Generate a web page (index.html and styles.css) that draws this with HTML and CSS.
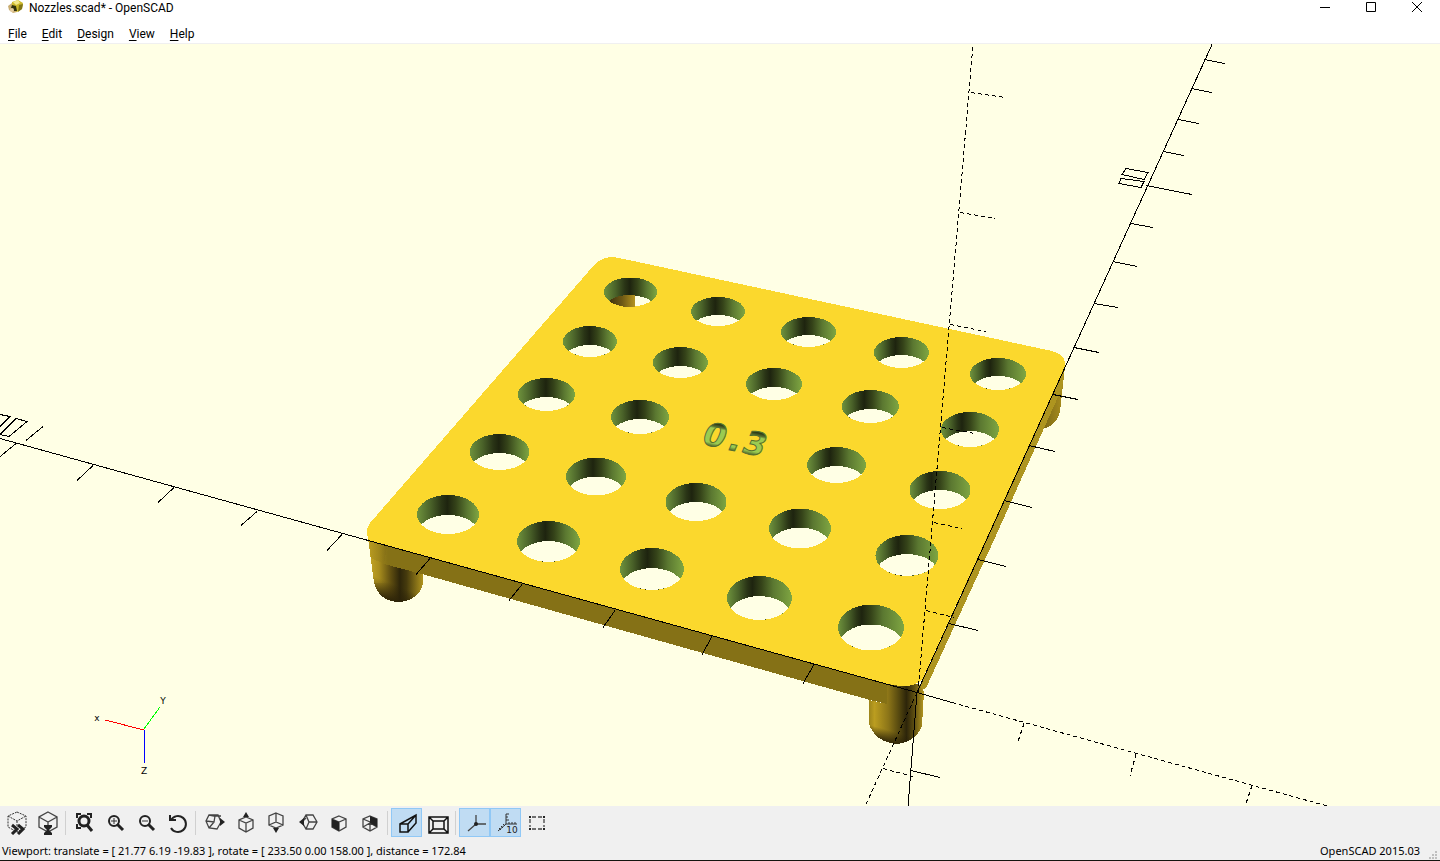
FILE: index.html
```html
<!DOCTYPE html>
<html lang="en">
<head>
<meta charset="utf-8">
<title>Nozzles.scad* - OpenSCAD</title>
<link rel="stylesheet" href="styles.css">
</head>
<body>
<div class="window">
  <header class="titlebar">
    <svg class="app-icon" viewBox="0 0 16 14" aria-hidden="true">
      <path d="M0 6 4 3 9 7 9 12 5 13 1 10z" fill="#c9ad72"/>
      <path d="M4 2 10 0 15 3 14 9 9 12 4 8z" fill="#cdb92c"/>
      <path d="M5 2 10 0 12 3 8 5z" fill="#f3e78a"/>
      <path d="M4 5 8 6 9 11 6 11 3 8z" fill="#30310d"/>
      <path d="M11 5 15 4 14 9 10 12z" fill="#827617"/>
      <circle cx="4" cy="10" r="2" fill="#e6cda0"/>
    </svg>
    <h1 class="title">Nozzles.scad* - OpenSCAD</h1>
    <div class="controls">
      <button class="control" aria-label="Minimize"><svg viewBox="0 0 12 12"><path d="M1 6.500h10"/></svg></button>
      <button class="control" aria-label="Maximize"><svg viewBox="0 0 12 12"><path d="M1.500 1.500h9v9h-9z"/></svg></button>
      <button class="control" aria-label="Close"><svg viewBox="0 0 12 12"><path d="M1 1l10 10M11 1L1 11"/></svg></button>
    </div>
  </header>
  <nav class="menubar">
    <button class="menu"><u>F</u>ile</button>
    <button class="menu"><u>E</u>dit</button>
    <button class="menu"><u>D</u>esign</button>
    <button class="menu"><u>V</u>iew</button>
    <button class="menu"><u>H</u>elp</button>
  </nav>

  <main class="viewport">
    <svg class="scene" viewBox="0 44 1440 762" preserveAspectRatio="xMidYMid slice" role="img" aria-label="Nozzle holder plate">
      <defs>
        <linearGradient id="postLeft"><stop offset="0" stop-color="#c9a924"/><stop offset=".2" stop-color="#a88d1d"/><stop offset=".42" stop-color="#5e4d10"/><stop offset=".58" stop-color="#2e260a"/><stop offset=".7" stop-color="#453a0d"/><stop offset="1" stop-color="#b0941e"/></linearGradient>
        <linearGradient id="postRight"><stop offset="0" stop-color="#9d851b"/><stop offset=".1" stop-color="#bb9d20"/><stop offset=".35" stop-color="#8c7518"/><stop offset=".55" stop-color="#54470f"/><stop offset=".68" stop-color="#2d250a"/><stop offset=".82" stop-color="#5d4e11"/><stop offset="1" stop-color="#b89a20"/></linearGradient>
        <linearGradient id="postBack"><stop offset="0" stop-color="#5a4b10"/><stop offset=".4" stop-color="#7e6a16"/><stop offset="1" stop-color="#ad911e"/></linearGradient>
        <linearGradient id="capShade" x1=".65" y1="0" x2=".3" y2="1"><stop offset=".7" stop-color="#2a2108" stop-opacity="0"/><stop offset=".93" stop-color="#2a2108" stop-opacity=".85"/><stop offset="1" stop-color="#2a2108" stop-opacity=".3"/></linearGradient>
        <linearGradient id="faceEnd" gradientUnits="userSpaceOnUse" x1="368" y1="0" x2="388" y2="0"><stop offset="0" stop-color="#b4971f"/><stop offset="1" stop-color="#857116"/></linearGradient>
        <linearGradient id="peg"><stop offset="0" stop-color="#3d3210"/><stop offset=".5" stop-color="#6d5814"/><stop offset="1" stop-color="#b3931f"/></linearGradient>
        <linearGradient id="engrave" x1="0" y1="0" x2="0" y2="1"><stop offset=".2" stop-color="#303b17"/><stop offset=".27" stop-color="#577030"/><stop offset=".32" stop-color="#9bcb51"/><stop offset=".7" stop-color="#9bcb51"/><stop offset=".8" stop-color="#4b622a"/></linearGradient>
      </defs>

      <g class="solid">
        <path fill="url(#postBack)" d="M1065 366 1060 412Q1057 425 1043 429L1030 400z"/>
        <path fill="#ae951f" d="M1065 364 1062 388 994 540 970 592 926 688 917 692z"/>
        <path fill="url(#postLeft)" d="M368 538 374 583Q379 601 398 602 418 601 423 584V560z"/>
        <path fill="url(#capShade)" d="M368 538 374 583Q379 601 398 602 418 601 423 584V574z"/>
        <path fill="url(#faceEnd)" d="M368 538 892 684V705L870 700 422 574 384 564 371 558z"/>
        <path fill="url(#postLeft)" d="M368 538 387 546 384 564 423 575 423 584 374 583z" opacity=".35"/>
        <path fill="url(#postRight)" d="M869 700 887 704V684H919L924 692 922 726Q915 743 895 744 875 741 869 724z"/>
        <path fill="url(#capShade)" d="M869 700H923L922 726Q915 743 895 744 875 741 869 724z"/>
        <path fill="#fbd82d" d="M595 264Q603 257 613 257L624 259 1052 351Q1064 354 1065 363L1065 366 922 680Q914 687 900 686L888 684 370 541Q366 536 367 529L370 523z"/>
      </g>

      <g id="holes" class="solid"></g>
      <path class="solid" fill="url(#peg)" d="M609 301A26 14 0 0 1 635 295V307A26 14 0 0 1 609 301z"/>

      <text class="engraved" x="702 728 743" y="444" transform="rotate(12 702 444)">0.3</text>

      <g class="axes" transform="translate(0 .5)">
        <path d="M0 438 917 692 952 702M917 692 1212 44M917 692 908 806"/>
        <path d="M16 443-1 457M93 465 77 480M174 487 158 502M257 511 241 525M342 534 327 550M430 558 416 574M522 584 509 600M615 610 603 627M712 636 702 654M814 664 803 683"/>
        <path d="M1204 59 1225 63M1191 88 1212 92M1178 119 1199 123M1163 151 1184 155M1146 185 1192 194M1131 223 1153 227M1113 261 1137 266M1094 303 1118 307M1074 347 1099 352M1053 394 1078 399M1029 445 1055 451M1004 500 1032 507M978 559 1006 566M949 623 978 630M911 770 940 777"/>
        <path d="M43 426 26 440M16 418 27 421 9 436 0 434zM0 414 10 416 0 426"/>
        <path d="M1126 168 1148 172 1144 179 1122 174zM1121 178 1144 181 1141 187 1119 183z"/>
        <path class="dashed" d="M952 702 1329 806M917 692 865 806M918 692 973 44"/>
        <path class="dashed" d="M971 92 1005 97M960 212 995 218M950 324 986 331M942 427 975 433M934 522 962 528M926 610 954 617M883 768 913 776M1024 723 1018 741M1136 754 1130 775M1252 785 1246 803"/>
      </g>

      <g class="gizmo">
        <path stroke="#f00" d="M144 730 105 720"/>
        <path stroke="#0f0" d="M144 729 160 707"/>
        <path stroke="#00f" d="M144.500 730V763"/>
        <text x="97" y="721">x</text>
        <text x="163" y="704">Y</text>
        <text x="144" y="774">Z</text>
      </g>
    </svg>
  </main>

  <div class="toolbar" role="toolbar" aria-label="View">
    <button class="tool" aria-label="Preview"><svg viewBox="0 0 24 24"><path stroke-dasharray="2 1" d="M12 1 21 5V16L12 21 3 16V5zM3 5l9 5 9-5M12 10v5"/><path class="heavy" d="M7 14l5 4-5 5M13 14l5 4-5 5"/></svg></button>
    <button class="tool" aria-label="Render"><svg viewBox="0 0 24 24"><path class="edge" d="M12 1 21 6V16L12 21 3 16V6zM3 6l9 5 9-5M12 11v5"/><path class="filled" d="M8 14h8v2l-3 3 3 3v2H8v-2l3-3-3-3z"/></svg></button>
    <span class="separator"></span>
    <button class="tool" aria-label="View all"><svg viewBox="0 0 24 24"><path class="medium" d="M4 7V3h4M14 3h4v4M4 13v4h4"/><circle class="ring" cx="11" cy="10" r="5"/><path class="heavy" d="M14 14l5 6"/></svg></button>
    <button class="tool" aria-label="Zoom in"><svg viewBox="0 0 24 24"><circle class="lens" cx="10" cy="10" r="5"/><path d="M7 10h6M10 7v6"/><path class="heavy" d="M13 13l6 6"/></svg></button>
    <button class="tool" aria-label="Zoom out"><svg viewBox="0 0 24 24"><circle class="lens" cx="10" cy="10" r="5"/><path d="M7 10h6"/><path class="heavy" d="M13 13l6 6"/></svg></button>
    <button class="tool" aria-label="Reset view"><svg viewBox="0 0 24 24"><path class="medium" d="M5 9A8 8 0 1 1 5 17"/><path class="medium" d="M4 4v5h6"/></svg></button>
    <span class="separator"></span>
    <button class="tool" aria-label="Right"><svg viewBox="0 0 24 24"><path class="edge" d="M6 4H15L18 11 14 18 6 17 3 10zM6 4l5 1 7 0M12 5l-1 6-8-1M11 11l-5 6"/><path class="filled" d="M17 7l5 4-5 4z"/></svg></button>
    <button class="tool" aria-label="Top"><svg viewBox="0 0 24 24"><path class="edge" d="M12 6 19 9V17L12 21 5 17V9zM5 9l7 3 7-3M12 12v9M12 3v3"/><path class="filled" d="M12 1l3 5H9z"/></svg></button>
    <button class="tool" aria-label="Bottom"><svg viewBox="0 0 24 24"><path class="edge" d="M11 2 18 5V14L11 17 4 14V5zM11 2v9M4 14l7-3 7 3"/><path class="filled" d="M11 22l3-5H8z"/></svg></button>
    <button class="tool" aria-label="Left"><svg viewBox="0 0 24 24"><path class="edge" d="M10 4H17L21 11 17 18H10L6 11zM10 4l3 7H21M13 11l-3 7M6 11l4-4"/><path class="filled" d="M8 7l-5 4 5 4z"/></svg></button>
    <button class="tool" aria-label="Front"><svg viewBox="0 0 24 24"><path class="edge" d="M12 5 19 8V16L12 20 5 16V8zM5 8l7 3 7-3M12 11v9"/><path class="filled" d="M5 8l7 3v9l-7-4z"/></svg></button>
    <button class="tool" aria-label="Back"><svg viewBox="0 0 24 24"><path class="edge" d="M12 5 19 8V16L12 20 5 16V8zM5 8l7 3v9M5 16l7-4 7 4"/><path class="filled" d="M12 5l7 3v8l-7-4z"/></svg></button>
    <span class="separator"></span>
    <button class="tool active" aria-label="Perspective" aria-pressed="true"><svg viewBox="0 0 24 24"><path class="bold" d="M5 13h8v8H5zM5 13 21 4V12L13 21M13 13l8-9"/></svg></button>
    <button class="tool" aria-label="Orthogonal"><svg viewBox="0 0 24 24"><path class="bold" d="M3 6h19v16H3zM7 10h11v8H7zM3 6l4 4M22 6l-4 4M3 22l4-4M22 22l-4-4"/></svg></button>
    <span class="separator"></span>
    <button class="tool active" aria-label="Show axes" aria-pressed="true"><svg viewBox="0 0 24 24"><path class="edge" d="M13 4v9h10M13 13l-8 7"/><circle class="filled" cx="13" cy="13" r="2"/></svg></button>
    <button class="tool active" aria-label="Show scale markers" aria-pressed="true"><svg viewBox="0 0 24 24"><path d="M12 3v10h11M12 3h3M12 6h2M12 9h3M12 13l-8 7M15 13v-2M18 13v-2M21 13v-2M9 13l2 2M7 15l2 2M5 17l2 2"/><text class="scale-text" x="18" y="22">10</text></svg></button>
    <button class="tool" aria-label="Show edges"><svg viewBox="0 0 24 24"><path class="edge" d="M7 6h10M7 18h10M5 8v8M19 8v8" stroke-dasharray="4 2"/><path class="filled" d="M4 5h2v2H4zM18 5h2v2h-2zM4 17h2v2H4zM18 17h2v2h-2z"/></svg></button>
  </div>

  <footer class="statusbar">
    <span>Viewport: translate = [ 21.77 6.19 -19.83 ], rotate = [ 233.50 0.00 158.00 ], distance = 172.84</span>
    <span class="version">OpenSCAD 2015.03</span>
    <svg class="grip" viewBox="0 0 10 10" aria-hidden="true"><path d="M7 1h2v2H7zM4 4h2v2H4zM7 4h2v2H7zM1 7h2v2H1zM4 7h2v2H4zM7 7h2v2H7z"/></svg>
  </footer>
</div>
<script src="scene.js"></script>
</body>
</html>
```
FILE: styles.css
```css
* {
  box-sizing: border-box;
}

body {
  margin: 0;
  color: #000;
  font: 12px/16px Roboto, "Noto Sans", sans-serif;
}

button {
  margin: 0;
  padding: 0;
  border: 0;
  background: none;
  color: inherit;
  font: inherit;
}

.window {
  display: flex;
  flex-direction: column;
  height: 100vh;
  background: #fff;
  border-bottom: 1px solid #14140f;
}

.titlebar {
  display: flex;
  align-items: flex-start;
  height: 24px;
  padding-left: 8px;
}

.app-icon {
  width: 16px;
  height: 14px;
  margin-right: 5px;
}

.title {
  margin: 0;
  font-size: 12px;
  font-weight: 400;
  line-height: 16px;
}

.controls {
  display: flex;
  margin-left: auto;
}

.control {
  display: grid;
  place-items: center;
  width: 46px;
  height: 14px;
}

.control svg {
  width: 12px;
  height: 12px;
  fill: none;
  stroke: #000;
}

.menubar {
  display: flex;
  align-items: flex-start;
  gap: 15px;
  height: 20px;
  padding: 2px 8px 0;
  border-bottom: 1px solid #f0f0f0;
}

.menu {
  line-height: 16px;
}

.menu u {
  text-underline-offset: 2px;
}

.viewport {
  flex: 1;
  min-height: 0;
  background: #ffffe5;
}

.scene {
  display: block;
  width: 100%;
  height: 100%;
}

.solid,
.axes,
.gizmo {
  shape-rendering: crispEdges;
}

.axes {
  fill: none;
  stroke: #000;
}

.dashed {
  stroke-dasharray: 4 3;
}

.opening {
  fill: #ffffe5;
}

.engraved {
  fill: url(#engrave);
  stroke: #55702e;
  font: italic 700 32px "DejaVu Sans", sans-serif;
}

.gizmo text {
  font: 9px "DejaVu Sans", sans-serif;
  text-anchor: middle;
}

.toolbar {
  display: flex;
  height: 35px;
  padding: 2px 1px 4px;
  background: #f0f0f0;
}

.tool {
  display: grid;
  place-items: center;
  width: 31px;
  border: 1px solid transparent;
}

.tool.active {
  background: #c0dcf3;
  border-color: #90c8f6;
}

.tool svg {
  width: 24px;
  height: 24px;
  fill: none;
  stroke: #333;
}

.separator {
  width: 6px;
  background: linear-gradient(#d0d0d0, #d0d0d0) 2px 3px / 1px 24px no-repeat;
}

.tool .filled {
  fill: #222;
  stroke: none;
}

.tool .edge {
  stroke: #444;
  stroke-width: 1.3;
}

.tool .bold {
  stroke: #111;
  stroke-width: 1.5;
}

.tool .medium {
  stroke: #222;
  stroke-width: 2;
}

.tool .heavy {
  stroke: #222;
  stroke-width: 3;
}

.tool .ring {
  stroke: #222;
  stroke-width: 3;
}

.tool .lens {
  stroke: #222;
  stroke-width: 2;
}

.tool .scale-text {
  fill: #222;
  stroke: none;
  font: 9px "DejaVu Sans", sans-serif;
  text-anchor: middle;
}

.statusbar {
  display: flex;
  align-items: flex-end;
  height: 19px;
  padding-left: 2px;
  background: #f0f0f0;
  font: 11px/18px "Noto Sans", sans-serif;
}

.version {
  margin-left: auto;
}

.grip {
  width: 10px;
  height: 10px;
  margin: 0 2px 0 8px;
  fill: #bfbfbf;
}
```
FILE: scene.js
```javascript
const NS = "http://www.w3.org/2000/svg";

// Each row holds [cx, cy, rx, ry, column] for its holes; depth is the drop to the lower rim.
const rows = [
  { depth: 18, holes: [[630.5, 292, 26.5, 14.5, 0], [718, 311.5, 27, 14.5, 1], [808.5, 332, 27.5, 15, 2], [901.5, 352.5, 27.5, 15.5, 3], [998, 374, 28, 16, 4]] },
  { depth: 19, holes: [[590, 341.5, 27, 15.5, 0], [680.5, 362.5, 27.5, 15.5, 1], [774, 384, 28, 16, 2], [870.5, 406.5, 28.5, 16.5, 3], [970, 429.5, 29, 17.5, 4]] },
  { depth: 19, holes: [[546.5, 394.5, 28.5, 16.5, 0], [640, 417, 29, 17, 1], [836.5, 465, 29.5, 18, 3], [940, 490, 30.5, 19, 4]] },
  { depth: 19, holes: [[499.5, 452, 30, 18, 0], [596, 476.5, 30, 19, 1], [696, 502, 30.5, 19, 2], [800, 528.5, 31, 20, 3], [907, 555.5, 31.5, 20.5, 4]] },
  { depth: 20, holes: [[448, 514.5, 31, 19.5, 0], [548.5, 541.5, 31.5, 20.5, 1], [652, 569, 32, 21, 2], [759.5, 598, 32.5, 22, 3], [871, 627.5, 33, 23, 4]] }
];
const darkest = [0.49, 0.45, 0.43, 0.39, 0.36];

function make(parent, name, attributes) {
  const node = document.createElementNS(NS, name);
  for (const key in attributes) node.setAttribute(key, attributes[key]);
  parent.appendChild(node);
  return node;
}

const group = document.getElementById("holes");

darkest.forEach((dark, column) => {
  const gradient = make(group, "linearGradient", { id: "wall" + column });
  const stops = [[0, "#6f933d"], [dark * 0.45, "#4a6229"], [dark * 0.8, "#2a3516"], [dark, "#1e240f"], [dark + 0.14, "#354319"], [dark + 0.32, "#5b7831"], [1, "#7fa642"]];
  stops.forEach(([offset, color]) => make(gradient, "stop", { offset, "stop-color": color }));
});

rows.forEach(({ depth, holes }) => {
  holes.forEach(([cx, cy, rx, ry, column]) => {
    make(group, "ellipse", { cx, cy, rx, ry, fill: `url(#wall${column})` });
    const half = depth / 2;
    const reach = rx * Math.sqrt(1 - (half / ry) ** 2);
    const y = cy + half;
    make(group, "path", {
      class: "opening",
      d: `M${cx - reach} ${y}A${rx} ${ry} 0 0 1 ${cx + reach} ${y}A${rx} ${ry} 0 0 1 ${cx - reach} ${y}z`
    });
  });
});
```
